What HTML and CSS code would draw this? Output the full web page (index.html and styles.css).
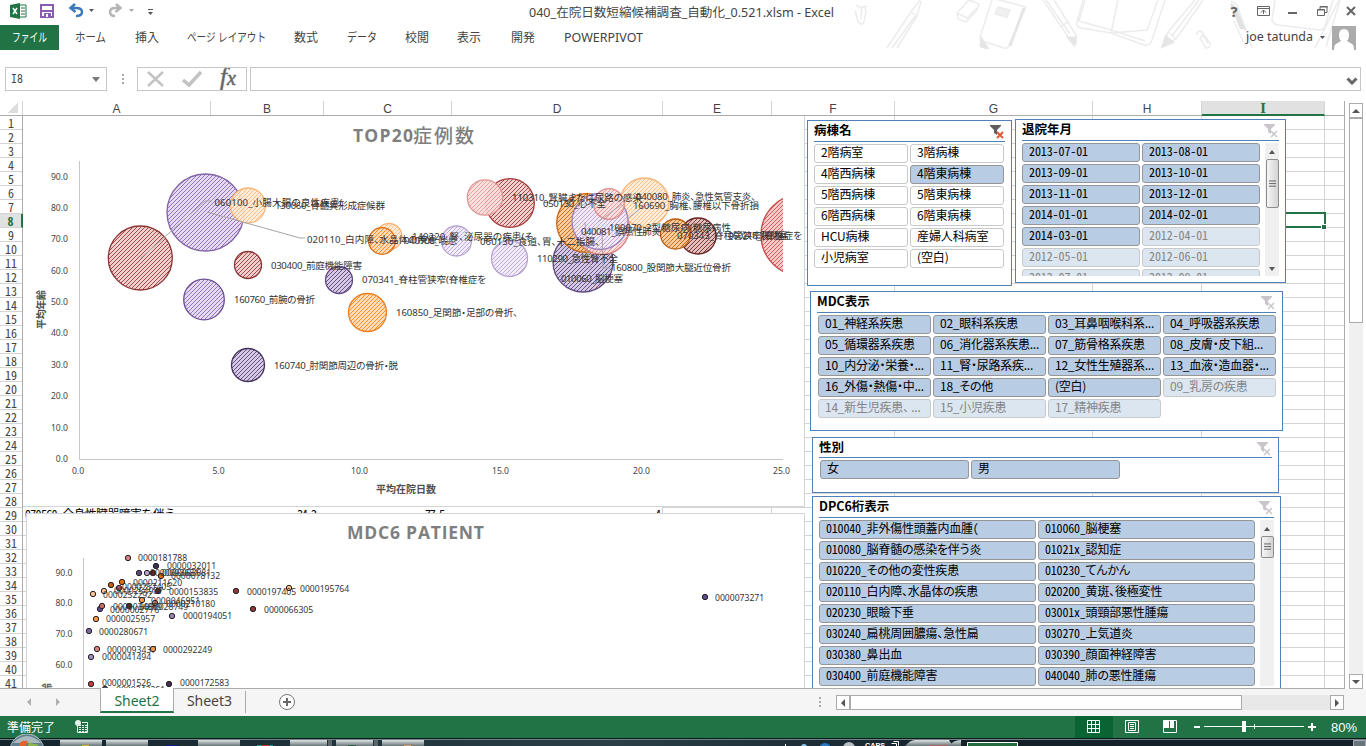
FILE: index.html
```html
<!DOCTYPE html>
<html lang="ja">
<head>
<meta charset="utf-8">
<title>040_在院日数短縮候補調査_自動化_0.521.xlsm - Excel</title>
<link rel="stylesheet" href="styles.css">
</head>
<body>
<svg class="defs" width="0" height="0" aria-hidden="true">
  <defs>
    <symbol id="funnel" viewBox="0 0 16 16">
      <path fill="#c9c5cb" d="M1 1h11v1L8 6v5l-3-2V6L1 2z"/>
      <path stroke="#c9c5cb" stroke-width="1.500" d="M8 8l6 6M14 8l-6 6"/>
    </symbol>
    <symbol id="funnel-on" viewBox="0 0 16 16">
      <path fill="#5f5f5f" d="M1 1h11v1L8 6v5l-3-2V6L1 2z"/>
      <path stroke="#e0573a" stroke-width="2" d="M8 8l6 6M14 8l-6 6"/>
    </symbol>
    <symbol id="lines" viewBox="0 0 8 8"><path d="M0 .5h8M0 3.500h8M0 6.500h8" stroke="#555"/></symbol>
  </defs>
</svg>
<div class="window">
  <header class="top">
    <svg class="doodles" width="516" height="49" viewBox="850 0 516 49">
      <g fill="none" stroke="#ececec" stroke-width="1.500">
        <path d="M855 11l3 10q3 6 6 1l2-11q-1-6-4-4l-1 12M856 5l5 3 6-2"/>
        <path d="M887 48l24-36 8-11 2 1-4 14-20 32M892 48l24-33M897 48l20-32M911 12l6 4"/>
        <path d="M957 13l12-13 10 4-2 6-11 12-8-3zM957 13l10 5 10-10"/>
        <path d="M992 0l-12 37q-1 3 2 4l22 7q4 1 5-3l17-38L992-2M980 40l8 8"/>
        <path d="M998 7l12 3-3 7-12-3z" fill="#f0f0f0"/>
        <path d="M1043 0l26 38 7 6 0-9-22-35M1060 27l8-5M1046 0l24 34"/>
        <path d="M1083 0l-6 22q-1 5 4 6l30 5 33 12q6 1 8-5l13-40M1118 0l-7 33M1111 33l36-3 11-30M1085 0l-6 21 32 9 34 11"/>
        <path d="M1163 46l5-14 27-32M1163 46l13-7 27-39M1168 32l8 7M1172 36l27-36"/>
        <path d="M1197 35q-1-4 4-4l9 12q1 5-4 5l-6-10 3-3 5 8"/>
        <path d="M1231 3q1-3 6 2l15 43M1234 21l12 27M1275 0l-3 20q1 4 6 5l42 5q4 0 5-4l8-26M1315 48l24-48M1340 0l-14 47"/>
      </g>
      <path d="M1230 4q4-3 9 10l7 16-6-1z" fill="#e2e2e2"/>
      <path d="M1163 46l3-9 6 5zM1074 44l-5-6 6 0zM982 40l5 8-6-2zM1010 46l14-38" fill="#e6e6e6" stroke="#e6e6e6" stroke-width="3"/>
    </svg>
    <div class="titlebar">
      <svg class="qat" width="170" height="25" viewBox="0 0 170 25">
        <path d="M10 5l10-2v16l-10-2z" fill="#217346"/>
        <path d="M20 5h6v12h-6" fill="#fff" stroke="#217346"/>
        <path d="M21 8h4M21 11h4M21 14h4" stroke="#217346"/>
        <path d="M13 8l4 6M17 8l-4 6" stroke="#fff" stroke-width="1.500"/>
        <path d="M41 5h12v12H41z" fill="#fff" stroke="#8a5caf" stroke-width="2"/>
        <path d="M42 10h10v2H42zM44 13h7v4h-7z" fill="#8a5caf"/><path d="M46 14h2v3h-2z" fill="#fff"/>
        <path d="M71 8h5q6 0 6 4t-6 4M75 4l-4.500 4 5 4" fill="none" stroke="#3e7ab9" stroke-width="2.500"/>
        <path d="M89 9h5l-2.500 3z" fill="#555"/>
        <path d="M120 8h-5q-5 0-5 4t5 4M116 4l4.500 4-5 4" fill="none" stroke="#b5b5b5" stroke-width="2.500"/>
        <path d="M129 9h5l-2.500 3z" fill="#aaa"/>
        <path d="M148 9h5v1h-5zM148 12h5l-2.500 3z" fill="#555"/>
      </svg>
      <svg class="label title" width="306" height="20"><text x="0" y="14" textLength="305" lengthAdjust="spacingAndGlyphs">040_在院日数短縮候補調査_自動化_0.521.xlsm - Excel</text></svg>
      <svg class="winctl" width="136" height="25" viewBox="1230 0 136 25">
        <text x="1230.500" y="16.500" class="help">?</text>
        <g fill="none" stroke="#666">
          <path d="M1257.500 6.500h12v9h-12zM1258 8.500h11M1263.500 14v-4M1261 12.500l2.500-2.500 2.500 2.500"/>
          <path d="M1288 13h9" stroke-width="2"/>
          <path d="M1317.500 9.500h7v6h-7zM1320 9v-2.500h7v6h-2"/><path d="M1317 10h8M1320 7h8"/>
          <path d="M1347 7l8 8M1355 7l-8 8" stroke-width="2"/>
        </g>
      </svg>
    </div>
    <nav class="tabs">
      <div class="file"><svg class="label" width="36" height="20"><text x="0" y="14" textLength="35" lengthAdjust="spacingAndGlyphs">ファイル</text></svg></div>
      <svg class="label" width="60" height="20"><text x="0" y="14" textLength="31" lengthAdjust="spacingAndGlyphs">ホーム</text></svg>
      <svg class="label" width="52" height="20"><text x="0" y="14" textLength="24">挿入</text></svg>
      <svg class="label" width="107" height="20"><text x="0" y="14" textLength="79" lengthAdjust="spacingAndGlyphs">ページ レイアウト</text></svg>
      <svg class="label" width="53" height="20"><text x="0" y="14" textLength="24">数式</text></svg>
      <svg class="label" width="58" height="20"><text x="0" y="14" textLength="30" lengthAdjust="spacingAndGlyphs">データ</text></svg>
      <svg class="label" width="52" height="20"><text x="0" y="14" textLength="24">校閲</text></svg>
      <svg class="label" width="54" height="20"><text x="0" y="14" textLength="24">表示</text></svg>
      <svg class="label" width="53" height="20"><text x="0" y="14" textLength="24">開発</text></svg>
      <svg class="label" width="90" height="20"><text x="0" y="14" textLength="79" lengthAdjust="spacingAndGlyphs">POWERPIVOT</text></svg>
      <div class="account">
        <svg class="label" width="84" height="20"><text x="0" y="13" textLength="67" lengthAdjust="spacingAndGlyphs">joe tatunda</text><path d="M74 8h5l-2.500 3z" fill="#555"/></svg>
        <svg width="24" height="24" viewBox="0 0 24 24"><path fill="#ababab" d="M0 0h24v24H0z"/><path fill="#fff" d="M12 3q5 0 5 6 0 4-2 6l5 3q2 1 2 6H2q0-5 2-6l5-3q-2-2-2-6 0-6 5-6z"/></svg>
      </div>
    </nav>
  </header>

  <section class="formula">
    <div class="namebox"><span>I8</span><svg width="8" height="5"><path d="M0 0h8L4 5z" fill="#777"/></svg></div>
    <svg width="30" height="24"><path d="M15 7h2v2h-2zM15 11h2v2h-2zM15 15h2v2h-2z" fill="#aaa"/></svg>
    <div class="fxbox">
      <svg width="108" height="22" viewBox="138 68 108 22">
        <path d="M148 72l15 14M163 72l-15 14" stroke="#c3c3c3" stroke-width="2.500"/>
        <path d="M183 80l6 5 12-13" fill="none" stroke="#c3c3c3" stroke-width="3.500"/>
        <text class="fx" x="220" y="85">f<tspan font-size="20">x</tspan></text>
      </svg>
    </div>
    <div class="input"><svg width="12" height="8"><path d="M1.500 1.500L6 6l4.500-4.500" fill="none" stroke="#666" stroke-width="3"/></svg></div>
  </section>

  <main class="work">
    <div class="sheet">
      <div class="cols">
        <div class="corner"></div><div class="ca">A</div><div class="cb">B</div><div class="cc">C</div><div class="cd">D</div><div class="ce">E</div><div class="cf">F</div><div class="cg">G</div><div class="ch">H</div><div class="ci on">I</div>
      </div>
      <div class="body">
        <div class="rows">
          <div>1</div><div>2</div><div>3</div><div>4</div><div>5</div><div>6</div><div>7</div><div class="on">8</div><div>9</div><div>10</div><div>11</div><div>12</div><div>13</div><div>14</div><div>15</div><div>16</div><div>17</div><div>18</div><div>19</div><div>20</div><div>21</div><div>22</div><div>23</div><div>24</div><div>25</div><div>26</div><div>27</div><div>28</div><div>29</div><div>30</div><div>31</div><div>32</div><div>33</div><div>34</div><div>35</div><div>36</div><div>37</div><div>38</div><div>39</div><div>40</div><div>41</div>
        </div>
        <div class="canvas">
          <svg class="cells" width="1321" height="572" viewBox="23 116 1321 572">
            <defs><pattern id="rowline" width="20" height="14" patternUnits="userSpaceOnUse" y="116"><path d="M0 13.500h20" stroke="#d4d4d4"/></pattern></defs>
            <path fill="url(#rowline)" d="M23 116h1321v572H23z"/>
            <path stroke="#d4d4d4" d="M771.500 116v572M662.500 116v572M894.500 116v572M1092.500 116v572M1201.500 116v572M1324.500 116v572"/>
            <path fill="#fff" d="M23 507h639v14H23z"/>
            <g class="celltext"><text x="25" y="519" textLength="151">070560_全身性臓器障害を伴う</text><text x="297" y="519" textLength="20">34.2</text><text x="425" y="519" textLength="20">77.5</text><text x="655" y="519">4</text></g>
            <path d="M1202 213h123v14h-123z" fill="none" stroke="#217346" stroke-width="2"/>
            <path d="M1321.500 224.500h5v5h-5z" fill="#217346" stroke="#fff"/>
          </svg>

          <svg class="chart chart-top" width="782" height="391" viewBox="23 116 782 391">
            <defs>
              <pattern id="h1" width="4" height="4" patternUnits="userSpaceOnUse"><path fill="#efcccb" d="M0 0h4v4H0z"/><path d="M-1 1l2-2M0 4l4-4M3 5l2-2" stroke="#a03a38"/></pattern>
              <pattern id="h2" width="4" height="4" patternUnits="userSpaceOnUse"><path fill="#e3d8f0" d="M0 0h4v4H0z"/><path d="M-1 1l2-2M0 4l4-4M3 5l2-2" stroke="#8c68b8"/></pattern>
              <pattern id="h3" width="4" height="4" patternUnits="userSpaceOnUse"><path fill="#ffecd8" d="M0 0h4v4H0z"/><path d="M-1 1l2-2M0 4l4-4M3 5l2-2" stroke="#fdb878"/></pattern>
              <pattern id="h4" width="4" height="4" patternUnits="userSpaceOnUse"><path fill="#d2c4e2" d="M0 0h4v4H0z"/><path d="M-1 1l2-2M0 4l4-4M3 5l2-2" stroke="#56417a"/></pattern>
              <pattern id="h5" width="4" height="4" patternUnits="userSpaceOnUse"><path fill="#ffdab4" d="M0 0h4v4H0z"/><path d="M-1 1l2-2M0 4l4-4M3 5l2-2" stroke="#fb8416"/></pattern>
              <pattern id="h6" width="4" height="4" patternUnits="userSpaceOnUse"><path fill="#f0eaf8" d="M0 0h4v4H0z"/><path d="M-1 1l2-2M0 4l4-4M3 5l2-2" stroke="#bba6d8"/></pattern>
              <pattern id="h7" width="4" height="4" patternUnits="userSpaceOnUse"><path fill="#fadedd" d="M0 0h4v4H0z"/><path d="M-1 1l2-2M0 4l4-4M3 5l2-2" stroke="#e89a98"/></pattern>
              <pattern id="h8" width="4" height="4" patternUnits="userSpaceOnUse"><path fill="#fac896" d="M0 0h4v4H0z"/><path d="M-1 1l2-2M0 4l4-4M3 5l2-2" stroke="#c8640e"/></pattern>
              <pattern id="h9" width="4" height="4" patternUnits="userSpaceOnUse"><path fill="#e2bbb9" d="M0 0h4v4H0z"/><path d="M-1 1l2-2M0 4l4-4M3 5l2-2" stroke="#742826"/></pattern>
              <pattern id="h10" width="4" height="4" patternUnits="userSpaceOnUse"><path fill="#f6c6c4" d="M0 0h4v4H0z"/><path d="M-1 1l2-2M0 4l4-4M3 5l2-2" stroke="#d05350"/></pattern>
              <clipPath id="plot"><path d="M79 160h704v300H79z"/></clipPath>
            </defs>
            <path fill="#fff" d="M23 116h782v391H23z"/>
            <path d="M23 506.500h781.500V116" fill="none" stroke="#d4d4d4"/>
            <path d="M79.500 161v298.500H783" fill="none" stroke="#c6c6c6"/>
            <text class="ctitle" x="353" y="142" textLength="60">TOP20</text><text class="ctitle cjk" x="413" y="143" textLength="61">症例数</text>
            <g class="axis end">
              <text x="68" y="180">90.0</text><text x="68" y="211">80.0</text><text x="68" y="242">70.0</text><text x="68" y="274">60.0</text><text x="68" y="305">50.0</text><text x="68" y="336">40.0</text><text x="68" y="368">30.0</text><text x="68" y="399">20.0</text><text x="68" y="431">10.0</text><text x="68" y="462">0.0</text>
            </g>
            <g class="axis mid"><text x="78" y="474">0.0</text><text x="218.500" y="474">5.0</text><text x="359.500" y="474">10.0</text><text x="500.500" y="474">15.0</text><text x="641.500" y="474">20.0</text><text x="781.500" y="474">25.0</text></g>
            <text class="atitle" x="376" y="493" textLength="60">平均在院日数</text>
            <text class="atitle" transform="translate(45 329) rotate(-90)" textLength="39">平均年齢</text>
            <g clip-path="url(#plot)" fill-opacity=".92" stroke-width="1.300">
              <circle cx="205.500" cy="212.500" r="38.500" fill="url(#h2)" stroke="#8262a8"/>
              <circle cx="140.300" cy="258" r="32" fill="url(#h1)" stroke="#8c3432"/>
              <circle cx="248" cy="205.500" r="17.500" fill="url(#h3)" stroke="#fab67a"/>
              <circle cx="248" cy="265" r="13.500" fill="url(#h1)" stroke="#8c3432"/>
              <circle cx="204" cy="299.500" r="20.300" fill="url(#h2)" stroke="#6a4b94"/>
              <circle cx="248" cy="365" r="16.500" fill="url(#h4)" stroke="#43325a"/>
              <circle cx="339" cy="280" r="13.500" fill="url(#h4)" stroke="#5f4a80"/>
              <circle cx="367.500" cy="312.500" r="19" fill="url(#h5)" stroke="#f07d19"/>
              <circle cx="389" cy="236.500" r="13" fill="url(#h3)" stroke="#fab67a"/>
              <circle cx="382" cy="241" r="13.300" fill="url(#h5)" stroke="#d96a10"/>
              <circle cx="456.500" cy="241" r="15" fill="url(#h6)" stroke="#b7a4d0"/>
              <circle cx="510" cy="203" r="24.300" fill="url(#h1)" stroke="#a53c3a"/>
              <circle cx="485" cy="197.500" r="17.700" fill="url(#h7)" stroke="#df9694"/>
              <circle cx="509.500" cy="258.500" r="18" fill="url(#h6)" stroke="#b7a4d0"/>
              <circle cx="583" cy="262" r="30" fill="url(#h4)" stroke="#5f4a80"/>
              <circle cx="586" cy="223" r="29.300" fill="url(#h8)" stroke="#c96511"/>
              <circle cx="602" cy="227" r="27.500" fill="url(#h7)" stroke="#df7c7a"/>
              <circle cx="644.500" cy="202.500" r="24.500" fill="url(#h3)" stroke="#fab67a"/>
              <circle cx="600" cy="221.500" r="28" fill="url(#h6)" stroke="#9c80c0"/>
              <circle cx="609" cy="204" r="15.300" fill="url(#h7)" stroke="#df8a88"/>
              <circle cx="698" cy="236" r="18" fill="url(#h9)" stroke="#662422"/>
              <circle cx="675.500" cy="234" r="15" fill="url(#h8)" stroke="#b85b0c"/>
              <circle cx="802" cy="235" r="41" fill="url(#h10)" stroke="#c74b48"/>
            </g>
            <g fill="none" stroke="#a6a6a6"><path d="M141 258l64-57h7M207 212l93 26h5M598 222l24-18M627 219l18-14M585 222l2 28 4 18M602 228l1 40h7"/></g>
            <g class="pt">
              <text x="214.500" y="206" textLength="128">060100_小腸大腸の良性疾患(</text>
              <text x="275" y="209" textLength="110">130060_骨髄異形成症候群</text>
              <text x="307" y="243" textLength="130">020110_白内障、水晶体の疾患</text>
              <text x="271" y="269" textLength="91">030400_前庭機能障害</text>
              <text x="362" y="283" textLength="124">070341_脊柱管狭窄(脊椎症を</text>
              <text x="234" y="303" textLength="81">160760_前腕の骨折</text>
              <text x="396" y="316" textLength="122">160850_足関節・足部の骨折、</text>
              <text x="274" y="369" textLength="124">160740_肘関節周辺の骨折・脱</text>
              <text x="404" y="244" textLength="53">040100_喘息</text>
              <text x="412" y="240" textLength="121">140220_腎、泌尿器の疾患(そ</text>
              <text x="480" y="245" textLength="120">060130_食道、胃、十二指腸、</text>
              <text x="512" y="201" textLength="130">110310_腎臓または尿路の感染</text>
              <text x="543" y="207" textLength="63">050130_心不全</text>
              <text x="636" y="200" textLength="120">040080_肺炎、急性気管支炎、</text>
              <text x="633" y="209" textLength="126">160690_胸椎、腰椎以下骨折損</text>
              <text x="581" y="235" textLength="80">040081_誤嚥性肺炎</text>
              <text x="609" y="231" textLength="122">100070_2型糖尿病(糖尿病性</text>
              <text x="677" y="239" textLength="125">070343_脊柱管狭窄(脊椎症を</text>
              <text x="728" y="239" textLength="60">060210_腸閉塞</text>
              <text x="537" y="262" textLength="81">110290_急性腎不全</text>
              <text x="611" y="271" textLength="120">160800_股関節大腿近位骨折</text>
              <text x="561" y="282" textLength="62">010060_脳梗塞</text>
            </g>
          </svg>

          <svg class="chart chart-bottom" width="779" height="175" viewBox="26 513 779 175">
            <path fill="#fff" stroke="#d4d4d4" d="M26.500 513.500h778v200h-778z"/>
            <text class="ctitle" x="347" y="539" textLength="137">MDC6 PATIENT</text>
            <path stroke="#c6c6c6" d="M83.500 558v130"/>
            <g class="axis end"><text x="72.500" y="576">90.0</text><text x="72.500" y="606">80.0</text><text x="72.500" y="637">70.0</text><text x="72.500" y="668">60.0</text></g>
            <text class="atitle" transform="translate(51 722) rotate(-90)" textLength="39">平均年齢</text>
            <g stroke="#222">
              <circle cx="128" cy="558" r="2.700" fill="#d98080"/><circle cx="156" cy="566" r="2.700" fill="#403152"/><circle cx="139" cy="573" r="2.700" fill="#604a7b"/><circle cx="147" cy="573" r="2.700" fill="#b3a2c7"/><circle cx="153" cy="573" r="2.700" fill="#632523"/><circle cx="161" cy="576" r="2.700" fill="#e46c0a"/><circle cx="122" cy="582" r="2.700" fill="#e46c0a"/><circle cx="111" cy="585" r="2.700" fill="#c55a11"/><circle cx="119" cy="588" r="2.700" fill="#c0504d"/><circle cx="104" cy="591" r="2.700" fill="#fac090"/><circle cx="158" cy="591" r="2.700" fill="#632523"/><circle cx="93" cy="594" r="2.700" fill="#fac090"/><circle cx="236" cy="591" r="2.700" fill="#953735"/><circle cx="289" cy="588" r="2.700" fill="#fac090"/><circle cx="253" cy="609" r="2.700" fill="#953735"/><circle cx="142" cy="600" r="2.700" fill="#f79646"/><circle cx="155" cy="603" r="2.700" fill="#d99694"/><circle cx="100" cy="609" r="2.700" fill="#604a9b"/><circle cx="102" cy="606" r="2.700" fill="#d06866"/><circle cx="129" cy="606" r="2.700" fill="#632523"/><circle cx="96" cy="619" r="2.700" fill="#f79646"/><circle cx="172" cy="616" r="2.700" fill="#9983b5"/><circle cx="89" cy="631" r="2.700" fill="#8064a2"/><circle cx="97" cy="649" r="2.700" fill="#d98080"/><circle cx="91" cy="657" r="2.700" fill="#a08cc0"/><circle cx="91" cy="684" r="2.700" fill="#c0403d"/><circle cx="169" cy="684" r="2.700" fill="#403152"/><circle cx="105" cy="689" r="2.700" fill="#604a7b"/><circle cx="705" cy="597" r="2.700" fill="#604a8b"/>
            </g>
            <g class="pt num">
              <text x="138" y="561">0000181788</text><text x="167" y="569">0000032011</text><text x="150" y="576">0000093681</text><text x="162" y="576">0000063081</text><text x="171" y="579">0000078132</text><text x="133" y="586">0000211620</text><text x="122" y="590">0000257405</text><text x="114" y="594">0000254987</text><text x="103" y="598">0000252292</text><text x="169" y="595">0000153835</text><text x="247" y="595">0000197405</text><text x="300" y="592">0000195764</text><text x="264" y="613">0000066305</text><text x="151" y="604">0000046951</text><text x="166" y="607">0000210180</text><text x="139" y="610">0000028749</text><text x="113" y="610">0000034869</text><text x="110" y="613">0000002776</text><text x="106" y="622">0000025957</text><text x="183" y="619">0000194051</text><text x="99" y="635">0000280671</text><text x="107" y="653">0000093437</text><text x="163" y="653">0000292249</text><text x="102" y="660">0000041494</text><text x="102" y="686">0000001526</text><text x="180" y="686">0000172583</text><text x="116" y="693">0000243261</text><text x="715" y="601">0000073271</text>
            </g>
            <circle cx="153" cy="649" r="2.700" fill="#f79646" stroke="#222"/>
          </svg>

          <div class="slicer ward">
            <h3>病棟名<svg class="clear"><use href="#funnel-on"/></svg></h3>
            <div class="items">
              <span>2階病室</span><span>3階病棟</span><span>4階西病棟</span><span class="on">4階東病棟</span><span>5階西病棟</span><span>5階東病棟</span><span>6階西病棟</span><span>6階東病棟</span><span>HCU病棟</span><span>産婦人科病室</span><span>小児病室</span><span>(空白)</span>
            </div>
          </div>
          <div class="slicer month">
            <h3>退院年月<svg class="clear"><use href="#funnel"/></svg></h3>
            <div class="scrolling">
              <div class="items">
                <span class="on">2013-07-01</span><span class="on">2013-08-01</span><span class="on">2013-09-01</span><span class="on">2013-10-01</span><span class="on">2013-11-01</span><span class="on">2013-12-01</span><span class="on">2014-01-01</span><span class="on">2014-02-01</span><span class="on">2014-03-01</span><span class="off">2012-04-01</span><span class="off">2012-05-01</span><span class="off">2012-06-01</span><span class="off">2012-07-01</span><span class="off">2012-08-01</span>
              </div>
              <div class="bar"><i class="up"></i><b><svg width="7" height="8"><use href="#lines"/></svg></b><i class="down"></i></div>
            </div>
          </div>
          <div class="slicer mdc">
            <h3>MDC表示<svg class="clear"><use href="#funnel"/></svg></h3>
            <div class="items">
              <span class="on">01_神経系疾患</span><span class="on">02_眼科系疾患</span><span class="on">03_耳鼻咽喉科系...</span><span class="on">04_呼吸器系疾患</span><span class="on">05_循環器系疾患</span><span class="on">06_消化器系疾患...</span><span class="on">07_筋骨格系疾患</span><span class="on">08_皮膚・皮下組...</span><span class="on">10_内分泌・栄養・...</span><span class="on">11_腎・尿路系疾...</span><span class="on">12_女性生殖器系...</span><span class="on">13_血液・造血器・...</span><span class="on">16_外傷・熱傷・中...</span><span class="on">18_その他</span><span class="on">(空白)</span><span class="off">09_乳房の疾患</span><span class="off">14_新生児疾患、 ...</span><span class="off">15_小児疾患</span><span class="off">17_精神疾患</span>
            </div>
          </div>
          <div class="slicer sex">
            <h3>性別<svg class="clear"><use href="#funnel"/></svg></h3>
            <div class="items"><span class="on">女</span><span class="on">男</span></div>
          </div>
          <div class="slicer dpc">
            <h3>DPC6桁表示<svg class="clear"><use href="#funnel"/></svg></h3>
            <div class="scrolling">
              <div class="items">
                <span class="on">010040_非外傷性頭蓋内血腫(</span><span class="on">010060_脳梗塞</span><span class="on">010080_脳脊髄の感染を伴う炎</span><span class="on">01021x_認知症</span><span class="on">010220_その他の変性疾患</span><span class="on">010230_てんかん</span><span class="on">020110_白内障、水晶体の疾患</span><span class="on">020200_黄斑、後極変性</span><span class="on">020230_眼瞼下垂</span><span class="on">03001x_頭頸部悪性腫瘍</span><span class="on">030240_扁桃周囲膿瘍、急性扁</span><span class="on">030270_上気道炎</span><span class="on">030380_鼻出血</span><span class="on">030390_顔面神経障害</span><span class="on">030400_前庭機能障害</span><span class="on">040040_肺の悪性腫瘍</span>
              </div>
              <div class="bar"><i class="up"></i><b><svg width="7" height="8"><use href="#lines"/></svg></b></div>
            </div>
          </div>
        </div>
      </div>
    </div>
    <div class="vscroll"><div class="btn"><i class="up"></i></div><div class="thumb"></div><div class="btn last"><i class="down"></i></div></div>
  </main>

  <section class="sheets">
    <svg class="arrows" width="100" height="27"><path d="M31 9v8l-4-4zM56 9v8l4-4z" fill="#b0b0b0"/></svg>
    <div class="stab on">Sheet2</div><div class="stab">Sheet3</div>
    <svg class="plus" width="20" height="20" viewBox="0 0 20 20"><circle cx="10" cy="10" r="7.500" fill="#fff" stroke="#777"/><path d="M10 6v8M6 10h8" stroke="#666" stroke-width="2"/></svg>
    <svg class="dots" width="4" height="14"><path d="M1 2h2v2H1zM1 6h2v2H1zM1 10h2v2H1z" fill="#aaa"/></svg>
    <div class="hscroll"><div class="btn"><i class="left"></i></div><div class="hthumb"></div><div class="btn last"><i class="right"></i></div></div>
  </section>

  <footer class="status">
    <svg class="label ready" width="50" height="20"><text x="0" y="15" textLength="48">準備完了</text></svg>
    <svg class="macro" width="14" height="14" viewBox="0 0 14 14"><path d="M2.500 4v8.500h10v-10H7" fill="none" stroke="#e6f1ea"/><path d="M4 5.500h8M4 7.500h8M4 9.500h8M4 11.500h8" stroke="#e6f1ea" stroke-dasharray="2 1"/><circle cx="3" cy="3" r="3" fill="#e6f1ea"/></svg>
    <svg class="views" width="291" height="22" viewBox="1075 716 291 22">
      <path fill="#0a6332" d="M1075 716h38v22h-38z"/>
      <g fill="none" stroke="#fff">
        <path d="M1087.500 720.500h12v12h-12zM1087 724.500h13M1087 728.500h13M1091.500 720v13M1095.500 720v13"/>
        <path d="M1125.500 720.500h13v12h-13zM1128.500 722.500h7v8h-7zM1130 724.500h4M1130 726.500h4M1130 728.500h4"/>
        <path d="M1163.500 720.500h13v12h-13z"/><path d="M1194 727h6M1308 727h8M1312 723v8" stroke-width="2"/><path d="M1204 726.500h100M1254.500 724v5"/>
      </g>
      <path fill="#fff" d="M1164 721h5v7h-5zM1170 721h4v7h-4zM1242 721h4v11h-4z"/>
      <text x="1331" y="732" textLength="26" lengthAdjust="spacingAndGlyphs">80%</text>
    </svg>
  </footer>
  <svg class="taskbar" width="1366" height="12" viewBox="0 734 1366 12">
    <defs><linearGradient id="tb" x2="0" y2="1"><stop offset="0" stop-color="#dfe4e4"/><stop offset="1" stop-color="#667477"/></linearGradient><linearGradient id="bar" x2="1" y2="0"><stop offset="0" stop-color="#14242c"/><stop offset=".45" stop-color="#2a3f48"/><stop offset=".7" stop-color="#14212b"/><stop offset="1" stop-color="#071119"/></linearGradient></defs>
    <path fill="url(#bar)" d="M0 738h1366v8H0z"/><path stroke="#0b1b18" d="M0 738.500h1366"/><path stroke="#71838a" d="M0 739.500h1366"/>
    <g fill="url(#tb)"><path d="M60 740h42v6H60zM106 740h42v6h-42zM198 740h42v6h-42zM290 740h37v6h-37zM336 740h37v6h-37zM382 740h42v6h-42zM905 746q5-6 10-6h34l4 6zM949 746q4-6 12-6h82v6z"/></g>
    <path fill="#152129" d="M961 740h405v6H961z"/><path fill="#5b666b" d="M328 740h4v6h-4zM374 740h4v6h-4z"/>
    <path fill="#246b3e" stroke="#fff" d="M967.500 742.500h50v5h-50z"/><path fill="#d9b42c" d="M82 745h7v1h-7z"/><path fill="#e29a5a" d="M404 745h7v1h-7z"/><path fill="#11198a" d="M166 745h14v1h-14z"/><path fill="#25a095" d="M257 745h16v1h-16z"/><path fill="#c33" d="M261 745h9v1h-9z"/><path fill="#25633f" d="M348 745h8v1h-8z"/><path fill="#b06060" d="M930 745h17v1h-17z"/>
    <circle cx="825" cy="749" r="6" fill="#2b79c5"/><circle cx="849" cy="748" r="6" fill="#b9bec5"/><path stroke="#fff" d="M785.500 744v2"/><circle cx="804" cy="747" r="3" fill="#8dc8ef"/>
    <text class="caps" x="865" y="748" textLength="20" lengthAdjust="spacingAndGlyphs">CAPS</text><path d="M891.500 743.500h5v3M893.500 741.500h5v4" fill="none" stroke="#fff"/>
    <circle cx="27" cy="751" r="17" fill="#5f7d8a" stroke="#b6c9cf"/><path fill="#a9b9be" d="M13 743q14-14 28 0z"/><path fill="#e5632b" d="M19 746q0-6 9-5l-2 5z"/><path fill="#8ab846" d="M29 742q4 3 10 2l-2 2h-9z"/>
    <path fill="#68747a" stroke="#aab" d="M1353.500 740.500h12v6h-12z"/>
  </svg>
</div>
</body>
</html>
```

FILE: styles.css
```css
* { box-sizing: border-box; }
body { margin: 0; font-family: "Noto Sans CJK JP", sans-serif; color: #444; background: #fff; }
svg { display: block; flex: none; }
.defs { position: absolute; }
.window { width: 1366px; height: 746px; overflow: hidden; display: flex; flex-direction: column; }

/* Title bar and ribbon tabs */
.top { height: 67px; position: relative; flex: none; }
.doodles { position: absolute; right: 0; top: 0; }
.titlebar { height: 25px; display: flex; position: relative; }
.label { overflow: visible; }
.label text { font: 12px "Noto Sans", "Noto Sans CJK JP", sans-serif; fill: #444; }
.title { margin: 3px 0 0 359px; }
.winctl { margin-left: 395px; }
.help { font: bold 15px "Noto Sans", sans-serif; fill: #666; }
.tabs { height: 25px; display: flex; align-items: center; position: relative; }
.file { width: 59px; height: 25px; margin-right: 16px; background: #217346; display: flex; justify-content: center; align-items: center; }
.file .label text { fill: #fff; }
.account { margin-left: auto; display: flex; align-items: center; padding-right: 10px; gap: 2px; }
.titlebar .winctl { margin-left: 134px; }
.titlebar .title + .winctl { margin-left: auto; }

/* Formula bar */
.formula { height: 34px; flex: none; display: flex; align-items: flex-start; padding-left: 5px; }
.namebox { width: 102px; height: 24px; border: 1px solid #c6c6c6; display: flex; align-items: center; justify-content: space-between; padding: 0 6px 0 5px; line-height: 20px; }
.namebox span { font-family: "DejaVu Sans Mono", monospace; font-size: 12px; transform: scaleX(.82); transform-origin: 0 50%; }
.fxbox { width: 110px; height: 24px; border: 1px solid #c6c6c6; }
.fx { font: italic 25px "Liberation Serif", serif; fill: #666; stroke: #666; stroke-width: .5px; }
.input { width: 1111px; height: 24px; margin-left: 3px; border: 1px solid #c6c6c6; display: flex; justify-content: flex-end; align-items: center; padding: 3px 2px 0 0; }

/* Worksheet */
.work { height: 588px; flex: none; display: flex; }
.sheet { width: 1345px; height: 588px; border-right: 1px solid #ababab; border-bottom: 1px solid #ababab; }
.cols { display: flex; height: 15px; border-bottom: 1px solid #ababab; font: 12px/16px "Liberation Sans", sans-serif; text-align: center; }
.cols > div { border-right: 1px solid #d4d4d4; height: 14px; }
.corner { width: 23px; background: linear-gradient(135deg, #fff 0 65%, #ddd 65%); background-size: 18px 12px; background-repeat: no-repeat; }
.ca { width: 188px; } .cb { width: 113px; } .cc { width: 128px; } .cd { width: 211px; } .ce { width: 109px; }
.cf { width: 123px; } .cg { width: 198px; } .ch { width: 109px; } .ci { width: 123px; }
.cols .on { background: #e1e1e1; color: #217346; font: bold 12px/16px "DejaVu Serif", serif; height: 15px; border-bottom: 2px solid #217346; }
.body { display: flex; height: 572px; overflow: hidden; }
.rows { width: 23px; flex: none; border-right: 1px solid #ababab; text-align: center; font-size: 12px; line-height: 14px; font-feature-settings: "hwid"; }
.rows div { height: 14px; border-bottom: 1px solid #d4d4d4; }
.rows .on { background: #e1e1e1; color: #217346; font-weight: bold; border-right: 2px solid #217346; margin-right: -1px; }
.canvas { position: relative; width: 1321px; height: 572px; overflow: hidden; }
.celltext text { font-size: 12px; fill: #000; font-feature-settings: "hwid"; }

/* Floating charts */
.chart, .cells { position: absolute; left: 0; top: 0; }
.chart-bottom { left: 3px; top: 397px; }
.ctitle { font: bold 17.5px "Open Sans", sans-serif; fill: #7f7f7f; }
.ctitle.cjk { font: 500 19px "Noto Sans CJK JP", sans-serif; }
.axis text { font: 8.6px "Noto Sans", sans-serif; fill: #444; }
.end text { text-anchor: end; }
.mid text { text-anchor: middle; }
.atitle { font: bold 10px "Noto Sans CJK JP", sans-serif; fill: #505050; }
.pt text { font: 10px "Noto Sans", "Noto Sans CJK JP", sans-serif; fill: #333; font-feature-settings: "palt"; }
.pt:not(.num) text { font-size: 9.6px; }
.num text { font-size: 8.6px; }

/* Floating slicers */
.slicer { position: absolute; background: #fff; border: 1px solid #4f81bd; padding: 2px 6px; }
.slicer h3 { margin: 0; height: 20px; border-bottom: 1px solid #4f81bd; font-size: 12.5px; line-height: 14px; color: #000; display: flex; justify-content: space-between; font-feature-settings: "hwid"; }
.clear { width: 16px; height: 16px; margin-top: 1px; }
.items { display: grid; grid-auto-rows: 19px; gap: 2px; padding: 2px 0 0 0; align-content: start; }
.items span { border: 1px solid #c9c9c9; border-radius: 3px; padding-left: 6px; font-size: 12px; line-height: 14px; color: #000; white-space: nowrap; overflow: hidden; font-feature-settings: "hwid", "palt"; }
.items .on { background: #b8cce4; border-color: #969696; }
.items .off { background: #dce6f1; border-color: #c9c9c9; color: #858585; }
.scrolling { display: flex; justify-content: space-between; overflow: hidden; }
.ward { left: 784px; top: 4px; width: 205px; height: 166px; }
.ward h3 { height: 19px; }
.ward .items { grid-template-columns: 94px 94px; }
.ward .items span { font-feature-settings: "palt"; letter-spacing: -.1px; }
.month { left: 992px; top: 3px; width: 271px; height: 164px; }
.month h3 { height: 19px; }
.month .items { grid-template-columns: 118px 118px; }
.month .items span { letter-spacing: -.1px; }
.month .scrolling { height: 135px; }
.mdc { left: 787px; top: 175px; width: 473px; height: 140px; }
.mdc h3 { height: 19px; font-feature-settings: normal; }
.mdc .items { grid-template-columns: repeat(4, 113px); padding-left: 1px; }
.mdc .items span { font-feature-settings: "palt"; letter-spacing: -.25px; }
.sex { left: 789px; top: 321px; width: 467px; height: 56px; }
.sex h3 { height: 18px; }
.sex .items { grid-template-columns: 149px 149px; padding-left: 1px; }
.dpc { left: 789px; top: 380px; width: 469px; height: 220px; }
.dpc h3 { height: 19px; font-feature-settings: normal; }
.dpc .items { grid-template-columns: 217px 217px; }
.dpc .items span { letter-spacing: -.2px; }
.bar { width: 14px; margin-top: 2px; background: #f0f0f0; display: flex; flex-direction: column; align-items: center; padding: 7px 0 5px; }
.bar b { width: 13px; height: 49px; margin-top: 5px; border: 1px solid #8d8d8d; border-radius: 2px; background: linear-gradient(90deg, #f5f5f5, #d4d4d6); display: flex; align-items: center; justify-content: center; flex: none; }
.dpc .bar b { height: 22px; }
.bar .down { margin-top: auto; }
.up, .down, .left, .right { width: 0; height: 0; border: 4px solid transparent; }
.up { border-top: 0; border-bottom-color: #555; }
.down { border-bottom: 0; border-top-color: #555; }
.left { border-left: 0; border-right-color: #555; }
.right { border-right: 0; border-left-color: #555; }
.bar .up, .bar .down { border-left-width: 3px; border-right-width: 3px; }

/* Scroll bars */
.vscroll { margin: 2px 0 0 4px; width: 14px; height: 586px; background: #f0f0f0; display: flex; flex-direction: column; }
.btn { width: 14px; height: 15px; flex: none; background: #fff; border: 1px solid #ababab; display: flex; align-items: center; justify-content: center; }
.thumb { height: 205px; background: #fff; border: 1px solid #ababab; }
.vscroll .last { margin-top: auto; }
.hscroll { width: 508px; height: 15px; background: #e8e8e8; display: flex; margin: 6px 0 0 14px; }
.hthumb { width: 392px; border: 1px solid #ababab; background: #fff; }
.hscroll .last { margin-left: auto; }

/* Sheet tabs */
.sheets { height: 27px; flex: none; background: #f5f5f5; display: flex; align-items: flex-start; }
.stab { height: 22px; margin-top: 2px; width: 72px; text-align: center; font: 14px/20px "Noto Sans", sans-serif; border-right: 1px solid #ababab; }
.stab.on { margin-top: -1px; height: 25px; width: 74px; line-height: 26px; background: #fff; color: #217346; border: 1px solid #ababab; border-top: 0; border-bottom: 2px solid #217346; }
.plus { margin: 3px 0 0 31px; }
.dots { margin: 6px 0 0 521px; }

/* Status bar and taskbar */
.status { height: 22px; flex: none; background: #217346; display: flex; align-items: center; padding-left: 7px; }
.status .label text { fill: #fff; }
.macro { margin-left: 18px; }
.views { margin-left: auto; }
.views text { font: 13px "Liberation Sans", sans-serif; fill: #fff; }
.taskbar { margin-top: -4px; position: relative; }
.caps { font: bold 8px "Liberation Sans", sans-serif; fill: #fff; }
```
